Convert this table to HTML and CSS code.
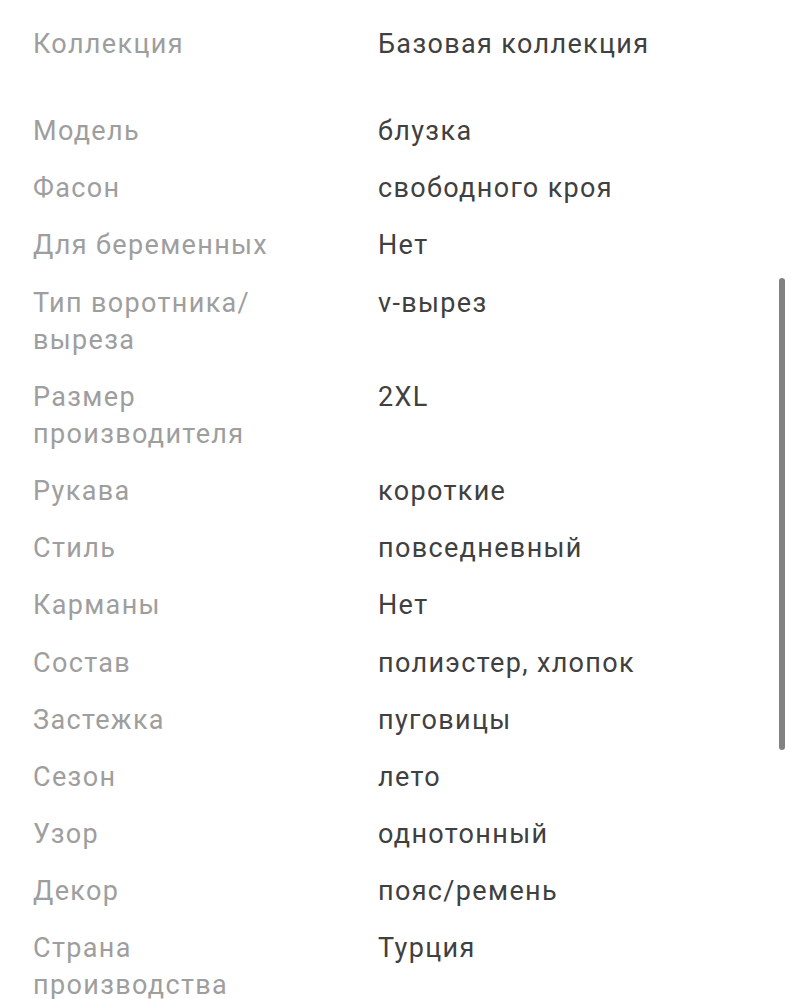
FILE: index.html
```html
<!DOCTYPE html>
<html lang="ru">
<head>
<meta charset="utf-8">
<link rel="stylesheet" href="styles.css">
</head>
<body>
<div class="page">
  <dl class="specs specs-top">
    <dt>Коллекция</dt><dd>Базовая коллекция</dd>
  </dl>
  <dl class="specs">
    <dt>Модель</dt><dd>блузка</dd>
    <dt>Фасон</dt><dd>свободного кроя</dd>
    <dt>Для беременных</dt><dd>Нет</dd>
    <dt>Тип воротника/ выреза</dt><dd>v-вырез</dd>
    <dt>Размер производителя</dt><dd>2XL</dd>
    <dt>Рукава</dt><dd>короткие</dd>
    <dt>Стиль</dt><dd>повседневный</dd>
    <dt>Карманы</dt><dd>Нет</dd>
    <dt>Состав</dt><dd>полиэстер, хлопок</dd>
    <dt>Застежка</dt><dd>пуговицы</dd>
    <dt>Сезон</dt><dd>лето</dd>
    <dt>Узор</dt><dd>однотонный</dd>
    <dt>Декор</dt><dd>пояс/ремень</dd>
    <dt>Страна производства</dt><dd>Турция</dd>
  </dl>
  <div class="scrollbar"></div>
</div>
</body>
</html>
```

FILE: styles.css
```css
html, body {
  margin: 0;
  padding: 0;
  background: #ffffff;
  overflow: hidden;
}
.page {
  position: relative;
  width: 792px;
  height: 999px;
  overflow: hidden;
  padding: 26px 0 0 33px;
  box-sizing: border-box;
  font-family: Roboto, "Noto Sans", sans-serif;
  font-size: 27px;
  letter-spacing: 1.35px;
  line-height: 37px;
}
.specs {
  display: grid;
  grid-template-columns: 280px 1fr;
  column-gap: 65px;
  row-gap: 20.2px;
  margin: 0;
}
.specs-top {
  margin-bottom: 50px;
}
.specs dt {
  color: #9e9e9e;
  margin: 0;
}
.specs dd {
  color: #404040;
  margin: 0;
}
.scrollbar {
  position: absolute;
  left: 779px;
  top: 278px;
  width: 6px;
  height: 472px;
  border-radius: 3px;
  background: #828282;
}
```
